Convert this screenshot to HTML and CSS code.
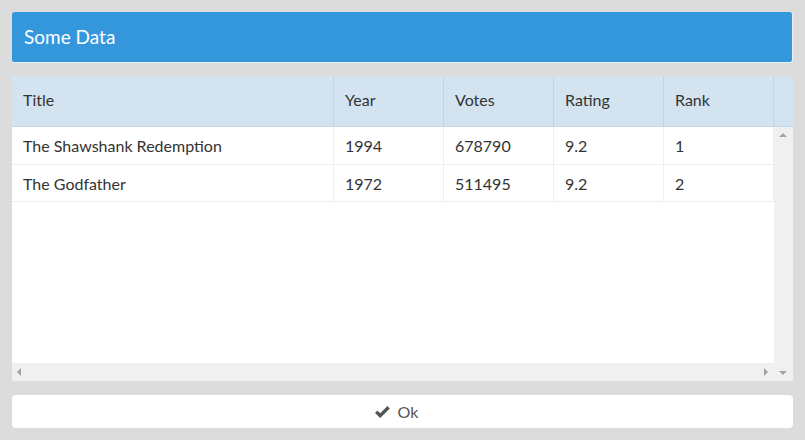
FILE: index.html
```html
<!DOCTYPE html>
<html>
<head>
<meta charset="utf-8">
<link rel="stylesheet" href="styles.css">
</head>
<body>
<div class="page">
  <div class="panel-header">Some Data</div>
  <div class="grid-box">
    <div class="grid-head">
      <div class="hcell c-title">Title</div>
      <div class="hcell c-num">Year</div>
      <div class="hcell c-num">Votes</div>
      <div class="hcell c-num">Rating</div>
      <div class="hcell c-num">Rank</div>
      <div class="hcell c-gutter"></div>
    </div>
    <div class="grid-body">
      <div class="rows">
        <div class="row">
          <div class="cell c-title">The Shawshank Redemption</div>
          <div class="cell c-num">1994</div>
          <div class="cell c-num">678790</div>
          <div class="cell c-num">9.2</div>
          <div class="cell c-num">1</div>
        </div>
        <div class="row">
          <div class="cell c-title">The Godfather</div>
          <div class="cell c-num">1972</div>
          <div class="cell c-num">511495</div>
          <div class="cell c-num">9.2</div>
          <div class="cell c-num">2</div>
        </div>
      </div>
      <div class="vscroll">
        <span class="arrow up"></span>
        <span class="arrow down"></span>
      </div>
      <div class="hscroll">
        <span class="arrow left"></span>
        <span class="arrow right"></span>
      </div>
    </div>
  </div>
  <button class="ok-btn">
    <svg class="check" width="15" height="13" viewBox="0 0 15 13"><path d="M1.2 6.8 L5.2 10.6 L13.6 2.2" fill="none" stroke="#555" stroke-width="3.4"/></svg>
    <span>Ok</span>
  </button>
</div>
</body>
</html>
```

FILE: styles.css
```css
html, body {
  margin: 0;
  padding: 0;
  background: #dcdcdc;
}
body {
  font-family: "Lato", "Liberation Sans", sans-serif;
  color: #333;
}
.page {
  padding: 12px 12px 0 12px;
  display: flex;
  flex-direction: column;
}
.panel-header {
  height: 51px;
  box-sizing: border-box;
  background: #3597db;
  border-radius: 3px;
  border-right: 1px solid #e8f1f8;
  border-bottom: 1px solid #e8f1f8;
  color: #fff;
  font-size: 19px;
  line-height: 50px;
  padding-left: 12px;
}
.grid-box {
  margin-top: 13px;
  height: 305px;
  display: flex;
  flex-direction: column;
  background: #fff;
  border-radius: 0 0 3px 3px;
  overflow: hidden;
}
.grid-head {
  display: flex;
  height: 51px;
  background: #d3e3f0;
  border-bottom: 1px solid #c3d7e8;
  box-sizing: border-box;
  flex: none;
}
.hcell {
  box-sizing: border-box;
  border-right: 1px solid #bfd5e7;
  padding-left: 11px;
  line-height: 48px;
  font-size: 16px;
}
.c-title { width: 322px; }
.c-num { width: 110px; }
.c-gutter { flex: 1; border-right: none; }
.grid-body {
  flex: 1;
  display: grid;
  grid-template-columns: 1fr 19px;
  grid-template-rows: 1fr 18px;
  min-height: 0;
}
.rows {
  grid-column: 1;
  grid-row: 1;
}
.row {
  display: flex;
  height: 38px;
  box-sizing: border-box;
  border-bottom: 1px solid #eeeeee;
}
.row + .row { height: 37px; }
.cell {
  box-sizing: border-box;
  border-right: 1px solid #eeeeee;
  padding-left: 11px;
  font-size: 16px;
  display: flex;
  align-items: center;
}
.vscroll {
  grid-column: 2;
  grid-row: 1 / 3;
  background: #f0f0f0;
  position: relative;
}
.hscroll {
  grid-column: 1;
  grid-row: 2;
  background: #f0f0f0;
  position: relative;
}
.arrow {
  position: absolute;
  width: 0;
  height: 0;
  border: 4px solid transparent;
}
.arrow.up {
  top: 6px;
  left: 5px;
  border-bottom: 4px solid #a3a3a3;
  border-top: none;
}
.arrow.down {
  bottom: 6px;
  left: 5px;
  border-top: 4px solid #a3a3a3;
  border-bottom: none;
}
.arrow.left {
  left: 5px;
  top: 5px;
  border-right: 4px solid #a3a3a3;
  border-left: none;
}
.arrow.right {
  right: 6px;
  top: 5px;
  border-left: 4px solid #a3a3a3;
  border-right: none;
}
.ok-btn {
  margin-top: 14px;
  height: 33px;
  background: #fff;
  border: none;
  border-radius: 4px;
  font-family: "Lato", "Liberation Sans", sans-serif;
  font-size: 16px;
  color: #555;
  display: flex;
  align-items: center;
  justify-content: center;
  gap: 8px;
  padding: 0 12px 0 0;
}
.check { display: block; }
```
